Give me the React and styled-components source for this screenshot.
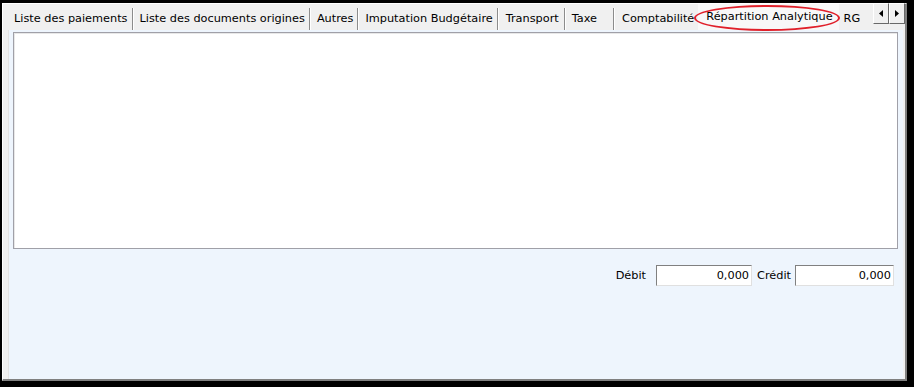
import React from "react";
import styled, { createGlobalStyle } from "styled-components";

const Global = createGlobalStyle`
  html, body { margin: 0; padding: 0; background: #000; }
  body { width: 914px; height: 387px; overflow: hidden; font-family: "DejaVu Sans", Verdana, sans-serif; }
`;

const Screen = styled.div`
  width: 914px;
  height: 387px;
  background: #000;
  padding: 3px 7px 6px 2px;
  box-sizing: border-box;
`;

const Window = styled.div`
  width: 100%;
  height: 100%;
  box-sizing: border-box;
  background: #f0f0f0;
  border-left: 1px solid #fff;
  border-top: 1px solid #fff;
  border-right: 2px solid #808080;
  border-bottom: 2px solid #808080;
  display: flex;
  flex-direction: column;
  padding: 0 0 0 5px;
`;

const TabStrip = styled.div`
  height: 26px;
  flex: none;
  display: flex;
  align-items: flex-end;
  position: relative;
  font-size: 11.3px;
  color: #000;
`;

const Tab = styled.div`
  height: ${p => (p.$selected ? "26px" : "22px")};
  box-sizing: border-box;
  display: flex;
  align-items: center;
  padding: 0 ${p => p.$pr ?? 4}px 1px ${p => p.$pl ?? 6}px;
  white-space: nowrap;
  border-right: ${p => (p.$sep ? "1px solid #8c8c8c" : "none")};
  box-shadow: ${p => (p.$sep ? "1px 0 0 #fff" : "none")};
  margin-right: ${p => (p.$sep ? "1px" : "0")};
  background: ${p => (p.$selected ? "#f8f8f8" : "transparent")};
  position: relative;
`;

const Ellipse = styled.div`
  position: absolute;
  left: -4px;
  right: -1px;
  top: 1px;
  bottom: -1px;
  border: 2px solid #e0202a;
  border-radius: 50%;
  pointer-events: none;
`;

const Scroller = styled.div`
  position: absolute;
  right: 0;
  top: -1px;
  display: flex;
`;

const ScrollBtn = styled.div`
  width: 16px;
  height: 21px;
  box-sizing: border-box;
  background: #f0f0f0;
  border-top: 1px solid #fff;
  border-left: 1px solid #fff;
  border-right: 1px solid #696969;
  border-bottom: 1px solid #696969;
  display: flex;
  align-items: center;
  justify-content: center;
`;

const Body = styled.div`
  flex: 1;
  background: #eef5fd;
  margin-right: 2px;
  border-left: 1px solid #e3e3e3;
  padding: 2px 5px 0 4px;
  display: flex;
  flex-direction: column;
`;

const Grid = styled.div`
  height: 217px;
  box-sizing: border-box;
  flex: none;
  background: #fff;
  border: 1px solid #a0a0a8;
  box-shadow: inset 1px 1px 0 #e8e8e8;
`;

const Totals = styled.div`
  display: flex;
  justify-content: flex-end;
  align-items: center;
  margin-top: 16px;
  padding-right: 4px;
  font-size: 11.3px;
`;

const Label = styled.span`
  margin-right: ${p => p.$mr}px;
`;

const Field = styled.div`
  width: ${p => p.$w}px;
  height: 21px;
  box-sizing: border-box;
  background: #fff;
  border-top: 1px solid #808080;
  border-left: 1px solid #808080;
  border-right: 1px solid #e0e0e0;
  border-bottom: 1px solid #e0e0e0;
  display: flex;
  align-items: center;
  justify-content: flex-end;
  padding-right: 2px;
  margin-right: ${p => p.$mr || 0}px;
`;

const Arrow = ({ dir }) => (
  <svg width="4" height="7" viewBox="0 0 4 7">
    {dir === "left" ? (
      <path d="M4 0 L0 3.5 L4 7 Z" fill="#000" />
    ) : (
      <path d="M0 0 L4 3.5 L0 7 Z" fill="#000" />
    )}
  </svg>
);

const tabs = [
  "Liste des paiements",
  "Liste des documents origines",
  "Autres",
  "Imputation Budgétaire",
];

export default function App() {
  return (
    <>
      <Global />
      <Screen>
        <Window>
          <TabStrip>
            {tabs.map(t => (
              <Tab key={t} $sep>{t}</Tab>
            ))}
            <Tab $sep $pl={7} $pr={5}>Transport</Tab>
            <Tab $sep $pr={16}>Taxe</Tab>
            <Tab $pl={7} $pr={4}>Comptabilité</Tab>
            <Tab $selected $pl={8} $pr={6}>
              Répartition Analytique
              <Ellipse />
            </Tab>
            <Tab $pl={5}>RG</Tab>
            <Scroller>
              <ScrollBtn><Arrow dir="left" /></ScrollBtn>
              <ScrollBtn><Arrow dir="right" /></ScrollBtn>
            </Scroller>
          </TabStrip>
          <Body>
            <Grid />
            <Totals>
              <Label $mr={10}>Débit</Label>
              <Field $w={96} $mr={5}>0,000</Field>
              <Label $mr={4}>Crédit</Label>
              <Field $w={99}>0,000</Field>
            </Totals>
          </Body>
        </Window>
      </Screen>
    </>
  );
}
